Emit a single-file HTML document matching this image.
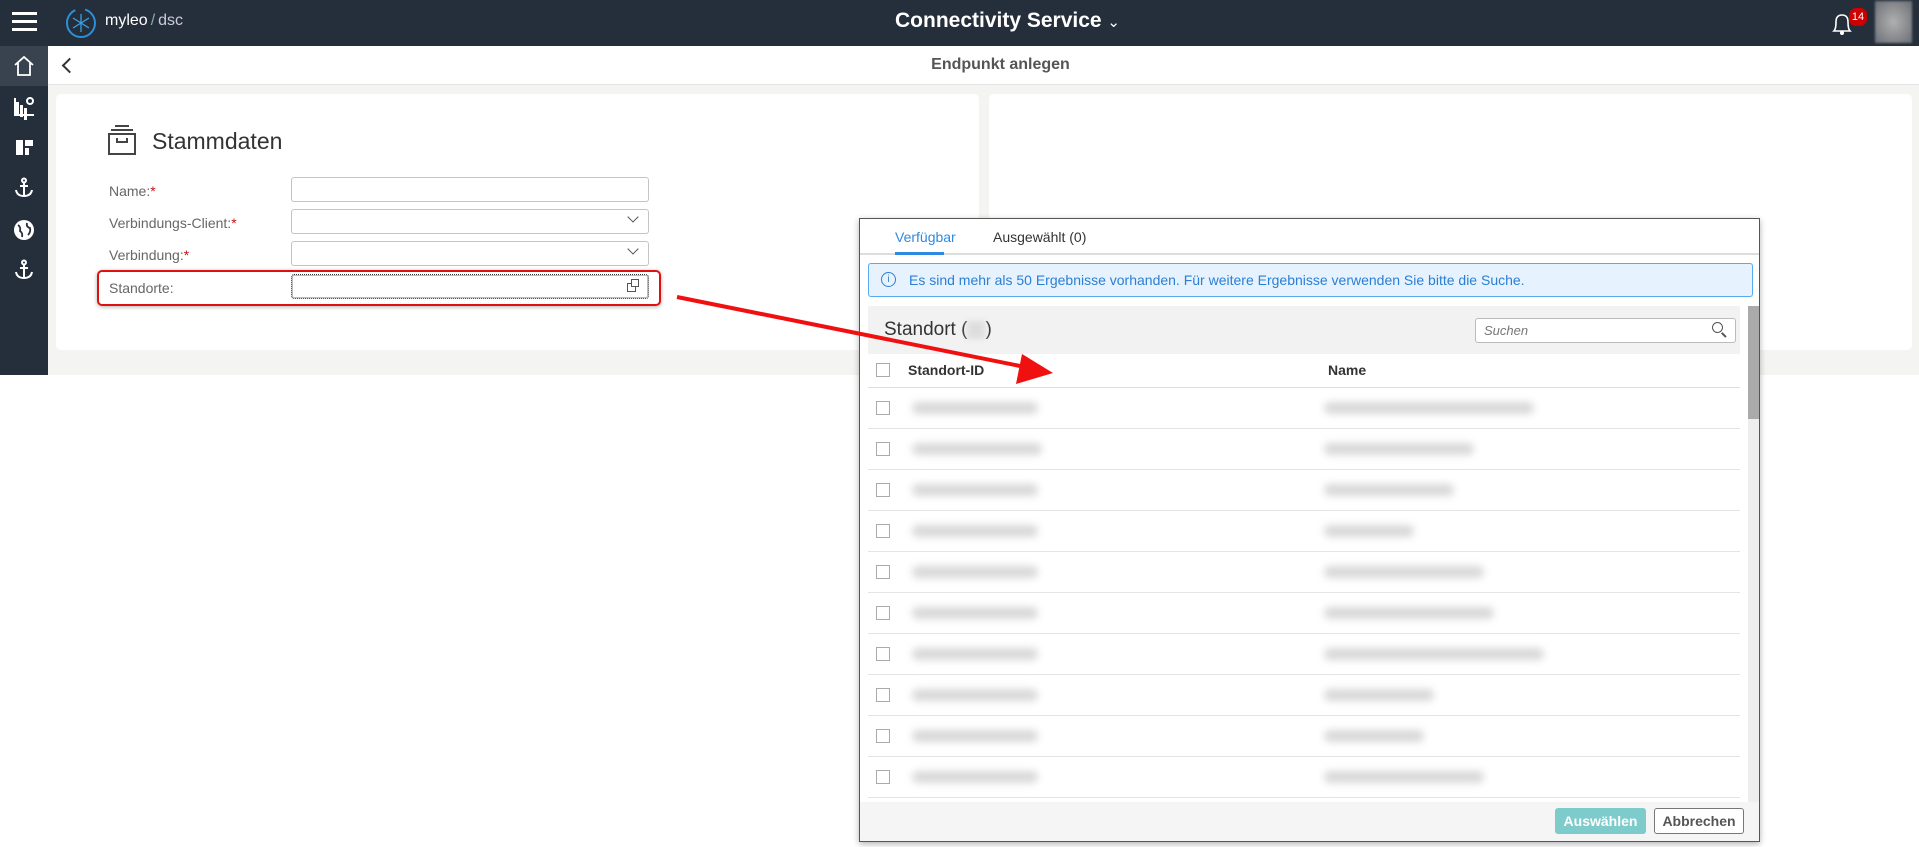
<!DOCTYPE html>
<html><head><meta charset="utf-8"><style>
*{box-sizing:border-box;margin:0;padding:0}
body{width:1919px;height:847px;overflow:hidden;background:#fff;font-family:"Liberation Sans",sans-serif;position:relative}
.a{position:absolute}
.hdr{left:0;top:0;width:1919px;height:46px;background:#252f3b}
.side{left:0;top:46px;width:48px;height:329px;background:#252f3b}
.sub{left:48px;top:46px;width:1871px;height:39px;background:#fff;border-bottom:1px solid #e4e4e4}
.cont{left:48px;top:85px;width:1871px;height:290px;background:#f4f4f2}
.card{background:#fff;border-radius:5px}
.lbl{font-size:14px;color:#666}
.req{color:#c0141c}
.inp{border:1px solid #c4c4c4;border-radius:3px;height:25px;width:358px;left:291px;background:#fff}
.blur{background:#d8d8d8;filter:blur(4px);height:12px;border-radius:6px}
.cb{width:14px;height:14px;border:1px solid #aaa;background:#fff}
</style></head><body>
<div class="a hdr"></div>
<div class="a" style="left:12px;top:12px;width:25px;height:3px;background:#fff;box-shadow:0 8px 0 #fff,0 16px 0 #fff"></div>
<svg class="a" style="left:64px;top:6px" width="34" height="34" viewBox="0 0 34 34"><circle cx="17" cy="17" r="14" fill="none" stroke="#2c8fd8" stroke-width="2" stroke-dasharray="60 10"/><g stroke="#3aa0e8" stroke-width="1.3"><line x1="17" y1="8" x2="17" y2="26"/><line x1="9" y1="12" x2="25" y2="22"/><line x1="9" y1="22" x2="25" y2="12"/></g></svg>
<div class="a" style="left:105px;top:12px;color:#fff;font-size:16px">myleo<span style="color:#8aa;margin:0 3px">/</span><span style="color:#ccd">dsc</span></div>
<div class="a" style="left:895px;top:9px;color:#fff;font-size:21px;font-weight:bold">Connectivity Service <span style="font-weight:normal;font-size:15px">&#8964;</span></div>
<svg class="a" style="left:1830px;top:10px" width="24" height="26" viewBox="0 0 24 26"><path d="M4 21 Q6 19 6 12 Q6 5 12 5 Q18 5 18 12 Q18 19 20 21 Z" fill="none" stroke="#fff" stroke-width="1.6"/><circle cx="12" cy="23" r="2" fill="#fff"/></svg>
<div class="a" style="left:1849px;top:8px;width:18px;height:18px;border-radius:7px;background:#c00;color:#fff;font-size:11px;text-align:center;line-height:18px">14</div>
<div class="a" style="left:1875px;top:1px;width:37px;height:42px;background:radial-gradient(#b0b0b0,#6a6e75);filter:blur(1px)"></div>
<div class="a side"></div>
<div class="a" style="left:0;top:46px;width:48px;height:40px;background:#39434f"></div>
<svg class="a" style="left:12px;top:54px" width="24" height="24"><path d="M3 11 L12 3 L21 11 M6 9 V21 H18 V9" fill="none" stroke="#fff" stroke-width="1.8"/></svg>
<div class="a" style="left:14px;top:98px;width:20px;height:18px;border-left:2px solid #fff;border-bottom:2px solid #fff"></div>
<div class="a" style="left:16px;top:102px;width:3px;height:12px;background:#fff;box-shadow:4px 3px 0 #fff,8px 6px 0 #fff"></div>
<div class="a" style="left:26px;top:97px;width:8px;height:8px;border-radius:50%;border:2px solid #fff"></div>
<div class="a" style="left:16px;top:140px;width:7px;height:15px;background:#fff"></div>
<div class="a" style="left:25px;top:140px;width:8px;height:6px;background:#fff"></div>
<div class="a" style="left:25px;top:148px;width:4px;height:7px;background:#fff"></div>
<svg class="a" style="left:13px;top:177px" width="22" height="22" viewBox="0 0 22 22"><g fill="none" stroke="#fff" stroke-width="2"><circle cx="11" cy="3.5" r="2"/><line x1="11" y1="6" x2="11" y2="19"/><line x1="7" y1="9" x2="15" y2="9"/><path d="M3 13 Q4 19 11 19 Q18 19 19 13"/></g></svg>
<svg class="a" style="left:13px;top:219px" width="22" height="22" viewBox="0 0 22 22"><circle cx="11" cy="11" r="10" fill="#fff"/><path d="M5 6 Q8 8 7 12 Q10 14 9 18 M14 4 Q13 8 17 9 Q18 13 15 16" fill="none" stroke="#252f3b" stroke-width="1.8"/></svg>
<svg class="a" style="left:13px;top:259px" width="22" height="22" viewBox="0 0 22 22"><g fill="none" stroke="#fff" stroke-width="2"><circle cx="11" cy="3.5" r="2"/><line x1="11" y1="6" x2="11" y2="19"/><line x1="7" y1="9" x2="15" y2="9"/><path d="M3 13 Q4 19 11 19 Q18 19 19 13"/></g></svg>
<div class="a sub"></div>
<div class="a" style="left:64px;top:60px;width:11px;height:11px;border-left:2px solid #333;border-bottom:2px solid #333;transform:rotate(45deg)"></div>
<div class="a" style="left:0;width:1919px;top:56px;text-align:center;padding-left:82px;font-size:16px;font-weight:bold;color:#555">Endpunkt anlegen</div>
<div class="a cont"></div>
<div class="a card" style="left:56px;top:94px;width:923px;height:256px"></div>
<div class="a card" style="left:989px;top:94px;width:923px;height:256px"></div>
<svg class="a" style="left:107px;top:124px" width="30" height="32" viewBox="0 0 30 32"><g fill="none" stroke="#444" stroke-width="2"><line x1="8" y1="2" x2="22" y2="2"/><line x1="4" y1="6" x2="26" y2="6"/><rect x="2" y="10" width="26" height="20"/><path d="M10 14 V18 H20 V14"/></g></svg>
<div class="a" style="left:152px;top:128px;font-size:23px;color:#333">Stammdaten</div>
<div class="a lbl" style="left:109px;top:183px">Name:<span class="req">*</span></div>
<div class="a lbl" style="left:109px;top:215px">Verbindungs-Client:<span class="req">*</span></div>
<div class="a lbl" style="left:109px;top:247px">Verbindung:<span class="req">*</span></div>
<div class="a lbl" style="left:109px;top:280px">Standorte:</div>
<div class="a inp" style="top:177px"></div>
<div class="a inp" style="top:209px"></div>
<div class="a inp" style="top:241px"></div>
<div class="a inp" style="top:274px;border:1px dotted #333;box-shadow:inset 0 0 0 1px #bbb"></div>
<div class="a" style="left:629px;top:213px;width:8px;height:8px;border-right:1.5px solid #555;border-bottom:1.5px solid #555;transform:rotate(45deg)"></div>
<div class="a" style="left:629px;top:245px;width:8px;height:8px;border-right:1.5px solid #555;border-bottom:1.5px solid #555;transform:rotate(45deg)"></div>
<div class="a" style="left:627px;top:283px;width:9px;height:9px;border:1.3px solid #555"></div>
<div class="a" style="left:631px;top:279px;width:8px;height:8px;border:1.3px solid #555;background:#fff"></div>
<div class="a" style="left:97px;top:270px;width:564px;height:36px;border:2px solid #e01010;border-radius:5px;box-shadow:0 1px 4px rgba(0,0,0,.3)"></div>
<div class="a" style="left:859px;top:218px;width:901px;height:624px;background:#fff;border:1px solid #555;box-shadow:0 2px 6px rgba(0,0,0,.3)"></div>
<div class="a" style="left:860px;top:253px;width:899px;height:2px;background:#ddd"></div>
<div class="a" style="left:895px;top:229px;font-size:14px;color:#2d8ae0">Verfügbar</div>
<div class="a" style="left:895px;top:252px;width:49px;height:3px;background:#2d8ae0"></div>
<div class="a" style="left:993px;top:229px;font-size:14px;color:#333">Ausgewählt (0)</div>
<div class="a" style="left:868px;top:263px;width:885px;height:34px;background:#e6f2fd;border:1px solid #5aa9ec;border-radius:3px"></div>
<div class="a" style="left:881px;top:272px;width:15px;height:15px;border:1.3px solid #2b7fd4;border-radius:50%;color:#2b7fd4;font-size:10px;text-align:center;line-height:13px">i</div>
<div class="a" style="left:909px;top:272px;font-size:14px;color:#2b7fd4">Es sind mehr als 50 Ergebnisse vorhanden. Für weitere Ergebnisse verwenden Sie bitte die Suche.</div>
<div class="a" style="left:868px;top:306px;width:872px;height:48px;background:#f2f2f2"></div>
<div class="a" style="left:884px;top:319px;font-size:19px;color:#333">Standort (<span style="display:inline-block;width:18px;height:18px;background:#ddd;filter:blur(3px);vertical-align:middle"></span>)</div>
<div class="a" style="left:1475px;top:318px;width:261px;height:25px;border:1px solid #bbb;border-radius:3px;background:#fff"></div>
<div class="a" style="left:1484px;top:323px;font-size:13px;font-style:italic;color:#777">Suchen</div>
<div class="a" style="left:1712px;top:322px;width:11px;height:11px;border:1.5px solid #555;border-radius:50%"></div>
<div class="a" style="left:1721px;top:334px;width:6px;height:1.5px;background:#555;transform:rotate(45deg)"></div>
<div class="a" style="left:1748px;top:306px;width:11px;height:496px;background:#eee"></div>
<div class="a" style="left:1748px;top:306px;width:11px;height:113px;background:#aaa"></div>
<div class="a cb" style="left:876px;top:363px"></div>
<div class="a" style="left:908px;top:362px;font-size:14px;font-weight:bold;color:#333">Standort-ID</div>
<div class="a" style="left:1328px;top:362px;font-size:14px;font-weight:bold;color:#333">Name</div>
<div class="a" style="left:868px;top:387px;width:872px;height:1px;background:#ddd"></div>
<div class="a" style="left:868px;top:388px;width:872px">
<div style="position:relative;height:41px;border-bottom:1px solid #e4e4e4"><div class="a cb" style="left:8px;top:13px"></div><div class="a blur" style="left:44px;top:14px;width:126px"></div><div class="a blur" style="left:456px;top:14px;width:210px"></div></div>
<div style="position:relative;height:41px;border-bottom:1px solid #e4e4e4"><div class="a cb" style="left:8px;top:13px"></div><div class="a blur" style="left:44px;top:14px;width:130px"></div><div class="a blur" style="left:456px;top:14px;width:150px"></div></div>
<div style="position:relative;height:41px;border-bottom:1px solid #e4e4e4"><div class="a cb" style="left:8px;top:13px"></div><div class="a blur" style="left:44px;top:14px;width:126px"></div><div class="a blur" style="left:456px;top:14px;width:130px"></div></div>
<div style="position:relative;height:41px;border-bottom:1px solid #e4e4e4"><div class="a cb" style="left:8px;top:13px"></div><div class="a blur" style="left:44px;top:14px;width:126px"></div><div class="a blur" style="left:456px;top:14px;width:90px"></div></div>
<div style="position:relative;height:41px;border-bottom:1px solid #e4e4e4"><div class="a cb" style="left:8px;top:13px"></div><div class="a blur" style="left:44px;top:14px;width:126px"></div><div class="a blur" style="left:456px;top:14px;width:160px"></div></div>
<div style="position:relative;height:41px;border-bottom:1px solid #e4e4e4"><div class="a cb" style="left:8px;top:13px"></div><div class="a blur" style="left:44px;top:14px;width:126px"></div><div class="a blur" style="left:456px;top:14px;width:170px"></div></div>
<div style="position:relative;height:41px;border-bottom:1px solid #e4e4e4"><div class="a cb" style="left:8px;top:13px"></div><div class="a blur" style="left:44px;top:14px;width:126px"></div><div class="a blur" style="left:456px;top:14px;width:220px"></div></div>
<div style="position:relative;height:41px;border-bottom:1px solid #e4e4e4"><div class="a cb" style="left:8px;top:13px"></div><div class="a blur" style="left:44px;top:14px;width:126px"></div><div class="a blur" style="left:456px;top:14px;width:110px"></div></div>
<div style="position:relative;height:41px;border-bottom:1px solid #e4e4e4"><div class="a cb" style="left:8px;top:13px"></div><div class="a blur" style="left:44px;top:14px;width:126px"></div><div class="a blur" style="left:456px;top:14px;width:100px"></div></div>
<div style="position:relative;height:41px;border-bottom:1px solid #e4e4e4"><div class="a cb" style="left:8px;top:13px"></div><div class="a blur" style="left:44px;top:14px;width:126px"></div><div class="a blur" style="left:456px;top:14px;width:160px"></div></div>
</div>
<div class="a" style="left:860px;top:802px;width:899px;height:39px;background:#f5f5f5"></div>
<div class="a" style="left:1555px;top:808px;width:91px;height:26px;background:#7ecbcc;border-radius:3px;color:#fff;font-size:14px;font-weight:bold;text-align:center;line-height:26px">Auswählen</div>
<div class="a" style="left:1654px;top:808px;width:90px;height:26px;border:1px solid #777;border-radius:3px;color:#555;font-size:14px;font-weight:bold;text-align:center;line-height:24px;background:#fff">Abbrechen</div>
<svg class="a" style="left:0;top:0;pointer-events:none" width="1919" height="847"><line x1="677" y1="297" x2="1030" y2="368" stroke="#f01010" stroke-width="4"/><polygon points="1053,373 1022,354 1016,384" fill="#f01010"/></svg>
</body></html>
